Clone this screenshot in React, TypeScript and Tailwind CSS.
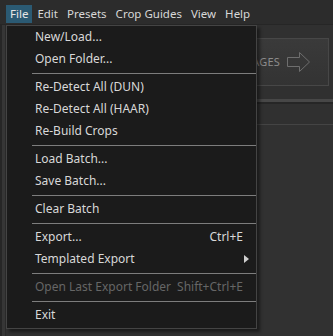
type Item =
  | { kind: "item"; label: string; shortcut?: string; sub?: boolean; disabled?: boolean }
  | { kind: "sep" };

const items: Item[] = [
  { kind: "item", label: "New/Load..." },
  { kind: "item", label: "Open Folder..." },
  { kind: "sep" },
  { kind: "item", label: "Re-Detect All (DUN)" },
  { kind: "item", label: "Re-Detect All (HAAR)" },
  { kind: "item", label: "Re-Build Crops" },
  { kind: "sep" },
  { kind: "item", label: "Load Batch..." },
  { kind: "item", label: "Save Batch..." },
  { kind: "sep" },
  { kind: "item", label: "Clear Batch" },
  { kind: "sep" },
  { kind: "item", label: "Export...", shortcut: "Ctrl+E" },
  { kind: "item", label: "Templated Export", sub: true },
  { kind: "sep" },
  { kind: "item", label: "Open Last Export Folder", shortcut: "Shift+Ctrl+E", disabled: true },
  { kind: "sep" },
  { kind: "item", label: "Exit" },
];

const menus = ["File", "Edit", "Presets", "Crop Guides", "View", "Help"];

export default function App() {
  return (
    <div
      className="relative w-[333px] h-[336px] overflow-hidden bg-[#303030] text-[12px] text-[#d8d8d8] flex flex-col"
      style={{ fontFamily: "'Noto Sans', 'Open Sans', sans-serif" }}
    >
      {/* menu bar */}
      <div className="h-[25px] shrink-0 bg-[#2c2c2c] border-b border-[#262626] flex items-start pl-[6px] pt-[5px] text-[11.5px]">
        {menus.map((m, i) => (
          <div
            key={m}
            className={
              "h-[18px] px-[4px] leading-[18px] mr-[1px] " +
              (i === 0 ? "bg-[#2b5a73] text-[#e6e6e6]" : "")
            }
          >
            {m}
          </div>
        ))}
      </div>

      {/* app body behind the menu */}
      <div className="flex-1 flex">
        <div className="w-[6px] flex">
          <div className="w-[2px] bg-[#262626]" />
          <div className="w-[3px] bg-[#363636]" />
          <div className="w-[1px] bg-[#2a2a2a]" />
        </div>
        <div className="flex-1 flex flex-col">
          <div className="h-[13px]" />
          <div className="flex justify-end pr-[4px]">
            <div className="w-[200px] h-[48px] border border-[#474747] bg-gradient-to-b from-[#3a3a3a] to-[#333333] flex items-center justify-end pr-[18px] gap-[7px]">
              <span className="text-[11px] text-[#8c8c8c] tracking-[0.2px]">NEXT IMAGES</span>
              <svg width="23" height="20" viewBox="0 0 23 20" fill="none">
                <path
                  d="M0.5 5.5 H12.5 V0.5 L22.5 10 L12.5 19.5 V14.5 H0.5 Z"
                  stroke="#6e6e6e"
                  strokeWidth="1"
                />
              </svg>
            </div>
          </div>
          <div className="h-[13px]" />
          <div className="h-[3px] bg-[#474747]" />
          <div className="h-[2px] bg-[#262626]" />
          <div className="h-[20px]" />
          <div className="h-[1px] bg-[#444444]" />
          <div className="flex-1 bg-[#313131]" />
        </div>
      </div>

      {/* File dropdown */}
      <div className="absolute left-[6px] top-[25px] w-[251px] bg-[#1b1b1b] border border-[#444444] pb-[2px] shadow-[3px_3px_3px_rgba(0,0,0,0.45)]">
        {items.map((it, i) =>
          it.kind === "sep" ? (
            <div key={i} className="h-[6px] pl-[25px] pt-[3px]">
              <div className="h-[1px] bg-[#7d7d7d]" />
            </div>
          ) : (
            <div
              key={i}
              className={
                "h-[22px] pl-[28px] pr-[13px] flex items-center justify-between " +
                (it.disabled ? "text-[#666666]" : "text-[#d8d8d8]")
              }
            >
              <span>{it.label}</span>
              {it.shortcut && <span>{it.shortcut}</span>}
              {it.sub && (
                <svg width="5" height="8" viewBox="0 0 5 8" className="mr-[-6px]">
                  <path d="M0 0 L5 4 L0 8 Z" fill="#cfcfcf" />
                </svg>
              )}
            </div>
          )
        )}
      </div>
    </div>
  );
}
